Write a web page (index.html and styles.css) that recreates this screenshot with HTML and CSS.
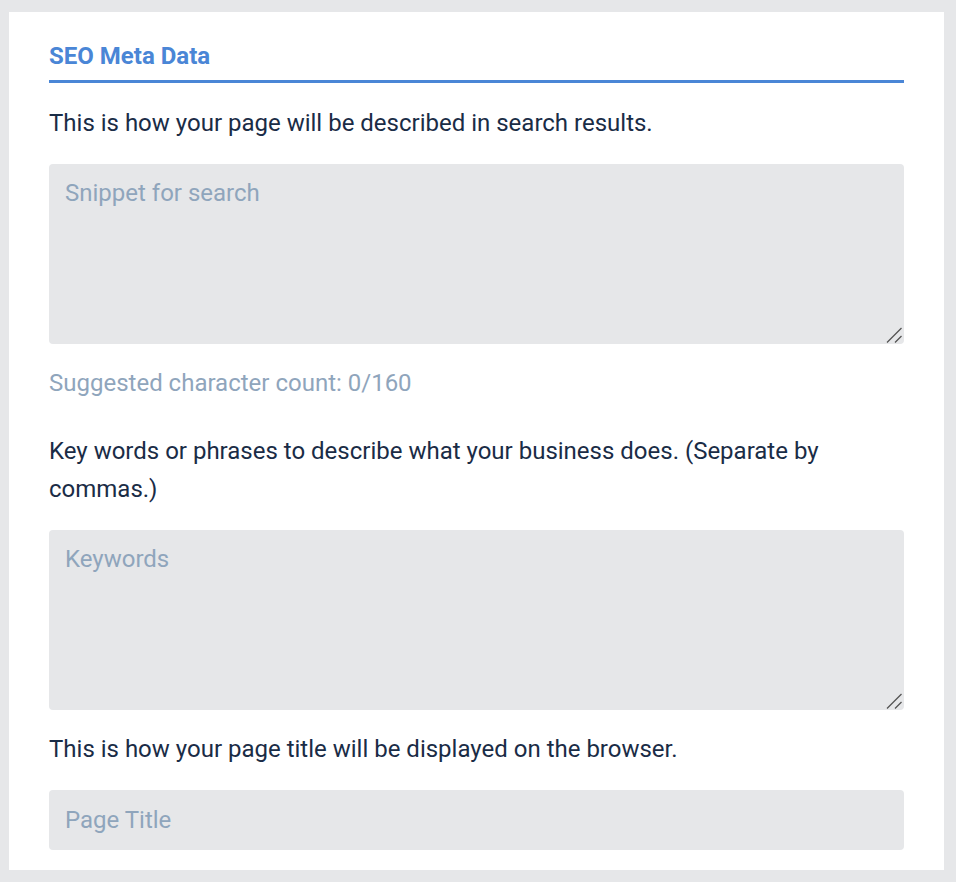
FILE: index.html
```html
<!DOCTYPE html>
<html lang="en">
<head>
  <meta charset="UTF-8" />
  <title>SEO Meta Data</title>
  <meta name="viewport" content="width=device-width, initial-scale=1.0" />
  <link rel="stylesheet" href="styles.css">
</head>
<body>

  <section class="card">
    <h2 class="card-title">SEO Meta Data</h2>

    <p class="hint">This is how your page will be described in search results.</p>
    <div class="area-wrap">
      <textarea class="field field-area" placeholder="Snippet for search"></textarea>
      <svg class="grip" width="16" height="16" viewBox="0 0 16 16"><path d="M1 15.5 L15.5 1 M9 15.5 L15.5 9" /></svg>
    </div>
    <p class="counter">Suggested character count: 0/160</p>

    <p class="hint">Key words or phrases to describe what your business does. (Separate by commas.)</p>
    <div class="area-wrap">
      <textarea class="field field-area" placeholder="Keywords"></textarea>
      <svg class="grip" width="16" height="16" viewBox="0 0 16 16"><path d="M1 15.5 L15.5 1 M9 15.5 L15.5 9" /></svg>
    </div>

    <p class="hint">This is how your page title will be displayed on the browser.</p>
    <input class="field field-line" type="text" placeholder="Page Title" />
  </section>

</body>
</html>
```

FILE: styles.css
```css
body {
  margin: 0;
  padding: 12px 12px 12px 9px;
  background: #e6e7e9;
  font-family: Roboto, "Liberation Sans", sans-serif;
  color: #1a2c46;
}

.card {
  background: #fff;
  height: 858px;
  box-sizing: border-box;
  padding: 30px 40px 20px;
  display: flex;
  flex-direction: column;
  overflow: hidden;
}

.card-title {
  margin: 0;
  font-size: 24px;
  font-weight: 700;
  color: #4a86d6;
  line-height: 26px;
  padding-top: 1px;
  padding-bottom: 11px;
  border-bottom: 3px solid #4a86d6;
}

.hint {
  margin: 21px 0 22px;
  font-size: 24px;
  line-height: 38px;
}

.counter {
  margin: 20px 0 9px;
  font-size: 24px;
  line-height: 38px;
  color: #8fa5bc;
}

.field {
  display: block;
  width: 100%;
  box-sizing: border-box;
  border: none;
  border-radius: 4px;
  background: #e6e7e9;
  font-family: inherit;
  font-size: 24px;
  color: #1a2c46;
  padding: 15px 16px;
  outline: none;
}

.field::placeholder {
  color: #8fa5bc;
}

.area-wrap {
  position: relative;
  flex-shrink: 0;
}

.field-area {
  height: 180px;
  resize: none;
}

.grip {
  position: absolute;
  right: 2px;
  bottom: 1px;
  fill: none;
  stroke: #555;
  stroke-width: 1.3;
  pointer-events: none;
}

.field-line {
  height: 60px;
  flex-shrink: 0;
}

.area-wrap + .hint {
  margin-top: 20px;
}
```
